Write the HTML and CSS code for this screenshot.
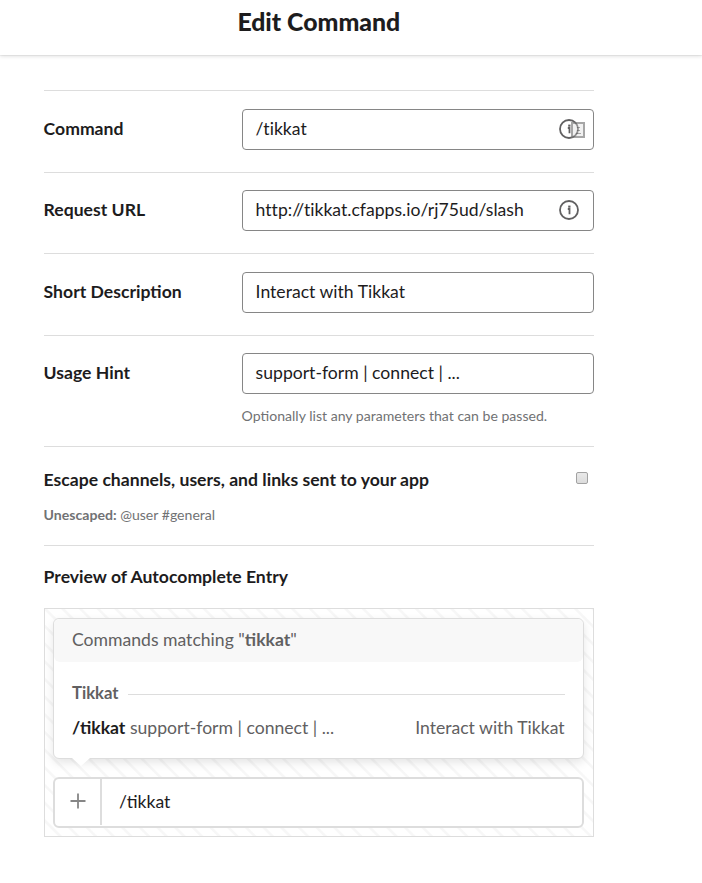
FILE: index.html
```html
<!DOCTYPE html>
<html lang="en">
<head>
<meta charset="utf-8">
<title>Edit Command</title>
<link rel="stylesheet" href="styles.css">
</head>
<body>
<header class="header"><h1 class="title">Edit Command</h1></header>
<main class="form">
  <div class="row">
    <label class="label">Command</label>
    <div class="field">
      <div class="input"><span>/tikkat</span>
        <svg class="info" viewBox="0 0 20 20"><circle cx="10" cy="10" r="9"/><path d="M8.8 9h1.7v5.3"/><rect x="9.2" y="5.6" width="2.3" height="2.1"/></svg>
        <svg class="badge" viewBox="0 0 14 16"><path class="badge-fill" d="M1 1h12v14H1z"/><path d="M1 1h12v14H1z"/><path class="badge-dots" d="M6 5.5h3M6 8.5h3M5 11.5h5"/></svg>
      </div>
    </div>
  </div>
  <div class="row row-short">
    <label class="label">Request URL</label>
    <div class="field">
      <div class="input"><span>http://tikkat.cfapps.io/rj75ud/slash</span>
        <svg class="info" viewBox="0 0 20 20"><circle cx="10" cy="10" r="9"/><path d="M8.8 9h1.7v5.3"/><rect x="9.2" y="5.6" width="2.3" height="2.1"/></svg>
      </div>
    </div>
  </div>
  <div class="row">
    <label class="label">Short Description</label>
    <div class="field"><div class="input"><span>Interact with Tikkat</span></div></div>
  </div>
  <div class="row row-hint">
    <label class="label">Usage Hint</label>
    <div class="field">
      <div class="input"><span>support-form | connect | ...</span></div>
      <p class="note">Optionally list any parameters that can be passed.</p>
    </div>
  </div>
  <section class="escape">
    <div class="escape-head"><h2 class="heading">Escape channels, users, and links sent to your app</h2><span class="checkbox"></span></div>
    <p class="unescaped"><b>Unescaped:</b> @user #general</p>
  </section>
  <section class="preview">
    <h2 class="heading">Preview of Autocomplete Entry</h2>
    <div class="stage">
      <div class="popover">
        <div class="popover-head">Commands matching "<b>tikkat</b>"</div>
        <div class="group"><b>Tikkat</b><span class="rule"></span></div>
        <div class="entry"><span><b class="command">/tikkat</b> support-form | connect | ...</span><span>Interact with Tikkat</span></div>
        <svg class="arrow" viewBox="0 0 18 9"><path d="M0 0h18l-9 8z"/></svg>
      </div>
      <div class="composer">
        <div class="plus"><svg viewBox="0 0 16 16"><path d="M8 .5v15M.5 8h15"/></svg></div>
        <div class="message">/tikkat</div>
      </div>
    </div>
  </section>
</main>
</body>
</html>
```
FILE: styles.css
```css
* { box-sizing: border-box; }
body { margin: 0; height: 883px; background: #fff; color: #1d1c1d; font: 17.6px/24px Lato, sans-serif; overflow: hidden; }
h1, h2, p { margin: 0; }
.header { height: 55px; padding: 4px 0 0 237.4px; box-shadow: 0 1px 0 rgba(0,0,0,.04), 0 1px 4px rgba(0,0,0,.15); }
.title { font-size: 24.8px; line-height: 36px; font-weight: 900; }
.form { width: 550px; margin: 35px 0 0 43.6px; }
.row { display: flex; height: 82px; border-top: 1px solid #ddd; padding-top: 18px; }
.row-short { height: 81px; padding-top: 17px; }
.row-hint { height: 111px; padding-top: 17px; }
.label { width: 198px; line-height: 39px; font-weight: 700; }
.field { width: 352px; }
.input { position: relative; height: 41px; border: 1px solid #868686; border-radius: 4px; padding: 0 13px; line-height: 37px; font-variant-ligatures: none; }
.info { position: absolute; right: 14px; top: 9px; width: 20px; height: 20px; fill: none; stroke: #616061; stroke-width: 1.8; }
.info rect { fill: #616061; stroke: none; }
.badge { position: absolute; right: 8px; top: 12px; width: 14px; height: 16px; fill: none; stroke: #777; stroke-width: 2; opacity: .65; }
.badge .badge-fill { fill: #ddd; stroke: none; opacity: .6; }
.badge .badge-dots { stroke-width: 1; }
.note { margin-top: 13px; font-size: 14.08px; line-height: 18px; color: #717274; }
.escape { height: 99px; border-top: 1px solid #ddd; padding-top: 21px; }
.escape-head { display: flex; justify-content: space-between; }
.heading { font-size: 17.6px; line-height: 24px; font-weight: 700; }
.checkbox { width: 12px; height: 12px; margin: 4px 6px 0 0; border: 1px solid #a2a2a2; border-radius: 2px; background: linear-gradient(#e9e9e9, #dcdcdc); }
.unescaped { margin-top: 14px; font-size: 14.08px; line-height: 18px; color: #717274; }
.preview { border-top: 1px solid #ddd; padding-top: 19px; }
.stage { height: 229px; margin-top: 19px; padding: 9px 9px 9px 8.4px; border: 1px solid #ddd; background: repeating-linear-gradient(45deg, #fff 0 8.9px, #f7f7f7 9.9px 11.5px, #fff 12.5px); }
.popover { position: relative; height: 141px; border: 1px solid #ddd; border-radius: 6px; background: #fff; box-shadow: 0 4px 10px rgba(0,0,0,.1); color: #616061; }
.popover-head { height: 43px; padding-left: 18px; line-height: 42px; border-radius: 6px; background: #f8f8f8; }
.group { display: flex; align-items: center; gap: 9px; margin: 19px 18px 0; }
.group b { font-size: 16.7px; }
.rule { flex: 1; height: 1px; margin-top: 2px; background: #ddd; }
.entry { display: flex; justify-content: space-between; margin: 11px 18px 0; }
.command { color: #1d1c1d; }
.arrow { position: absolute; left: 18px; top: 139px; width: 18px; height: 9px; fill: #fff; }
.composer { display: flex; height: 51px; margin-top: 18px; border: 2px solid #ddd; border-radius: 6px; background: #fff; }
.plus { width: 47px; height: 46px; border-right: 2px solid #ddd; padding: 14px 0 0 15px; }
.plus svg { display: block; width: 16px; height: 16px; stroke: #868686; stroke-width: 1.8; }
.message { padding-left: 17px; line-height: 45px; }
```
